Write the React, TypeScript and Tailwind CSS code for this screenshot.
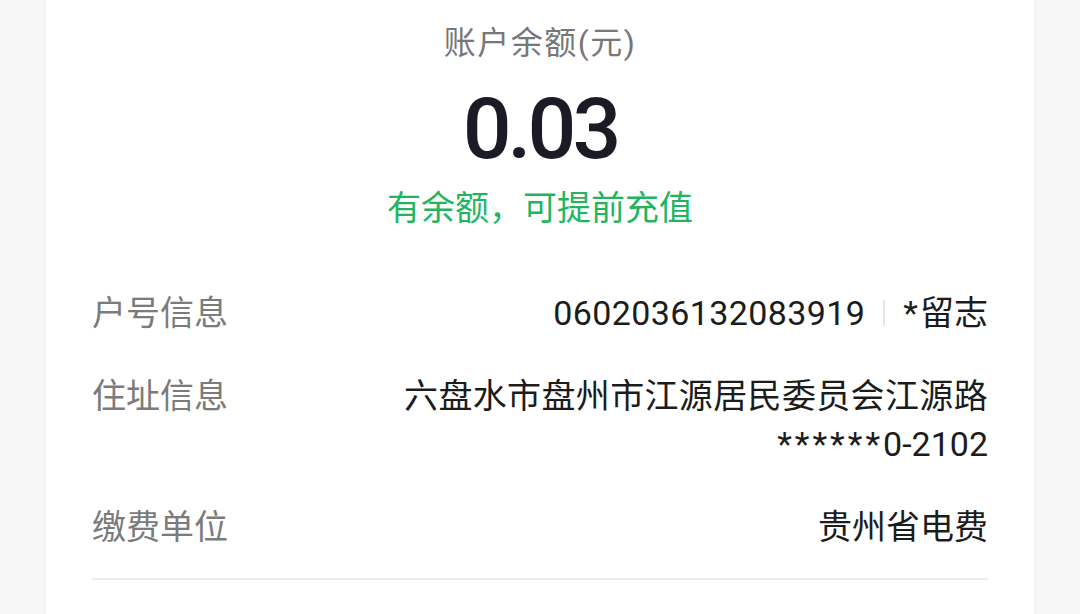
import React from "react";

const font = { fontFamily: "Roboto, 'Noto Sans CJK SC', sans-serif" };

const Row = ({ label, children }: { label: string; children: React.ReactNode }) => (
  <div className="flex items-start justify-between text-[34px] leading-[48px]">
    <span className="text-[#7b7b7b] shrink-0">{label}</span>
    <div className="text-right text-[#1c1c1c]">{children}</div>
  </div>
);

export default function App() {
  return (
    <div className="h-[614px] overflow-hidden bg-[#f7f7f7] px-[46px]" style={font}>
      <div className="min-h-[700px] bg-white px-[46px] shadow-[0_0_6px_rgba(0,0,0,0.05)]">
        {/* balance */}
        <div className="flex flex-col items-center">
          <div className="mt-[19px] text-[32px] leading-[48px] tracking-[1.5px] text-[#777777]">账户余额(元)</div>
          <div className="mt-[12px] text-[86px] leading-[100px] font-medium tracking-[-4px] text-[#1a1b24]">0.03</div>
          <div className="mt-[5px] text-[34px] leading-[48px] text-[#22b560]">有余额，可提前充值</div>
        </div>

        {/* account info */}
        <div className="mt-[57px] flex flex-col gap-[35px]">
          <Row label="户号信息">
            <div className="flex items-center">
              <span className="tracking-[0.4px]">0602036132083919</span>
              <span className="mx-[18px] h-[26px] w-[2px] bg-[#e6e6e6]"></span>
              <span><span className="tracking-[2px]">*</span>留志</span>
            </div>
          </Row>
          <Row label="住址信息">
            <div className="tracking-[0.35px]">六盘水市盘州市江源居民委员会江源路</div>
            <div><span className="tracking-[3px]">******</span>0-2102</div>
          </Row>
          <Row label="缴费单位">
            <span>贵州省电费</span>
          </Row>
        </div>

        <div className="mt-[27px] h-[2px] bg-[#ececec]"></div>
      </div>
    </div>
  );
}
